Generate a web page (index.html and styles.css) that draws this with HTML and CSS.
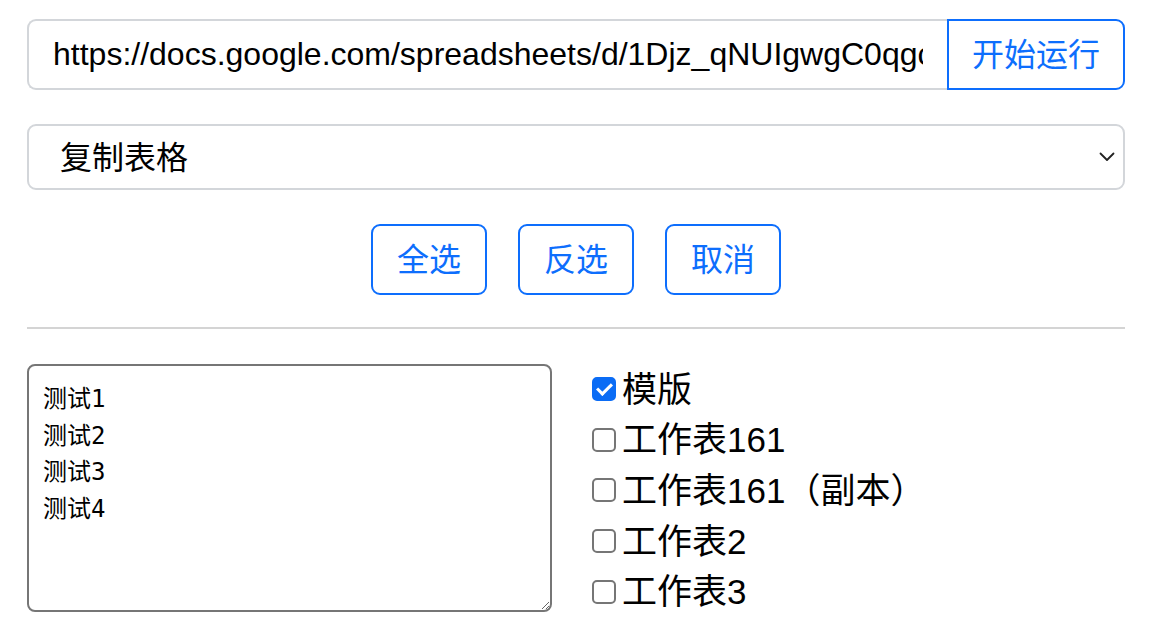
FILE: index.html
```html
<!DOCTYPE html>
<html lang="zh-CN">
<head>
<meta charset="utf-8">
<title>复制表格</title>
<link rel="stylesheet" href="styles.css">
</head>
<body>
<main class="page">
  <div class="input-group">
    <input class="url-input" type="text" value="https://docs.google.com/spreadsheets/d/1Djz_qNUIgwgC0qgcXk2mPv9sT3aLmQwErTyUiOp/edit">
    <button class="btn btn-run" type="button">开始运行</button>
  </div>

  <div class="select-wrap">
    <select class="mode-select">
      <option>复制表格</option>
    </select>
    <svg class="chevron" width="16" height="10" viewBox="0 0 16 10" aria-hidden="true"><path d="M1.5 1.5 L8 8 L14.5 1.5" fill="none" stroke="#222" stroke-width="1.8" stroke-linecap="round" stroke-linejoin="round"/></svg>
  </div>

  <div class="actions">
    <button class="btn btn-small" type="button">全选</button>
    <button class="btn btn-small" type="button">反选</button>
    <button class="btn btn-small" type="button">取消</button>
  </div>

  <hr class="divider">

  <div class="panel">
    <textarea class="names">测试1
测试2
测试3
测试4</textarea>
    <ul class="sheet-list">
      <li class="sheet"><label class="sheet-label"><input class="check" type="checkbox" checked><span>模版</span></label></li>
      <li class="sheet"><label class="sheet-label"><input class="check" type="checkbox"><span>工作表161</span></label></li>
      <li class="sheet"><label class="sheet-label"><input class="check" type="checkbox"><span>工作表161（副本）</span></label></li>
      <li class="sheet"><label class="sheet-label"><input class="check" type="checkbox"><span>工作表2</span></label></li>
      <li class="sheet"><label class="sheet-label"><input class="check" type="checkbox"><span>工作表3</span></label></li>
    </ul>
  </div>
</main>
</body>
</html>
```
FILE: styles.css
```css
* { box-sizing: border-box; }

html, body {
  margin: 0;
  padding: 0;
  background: #fff;
}

body {
  font-family: "Liberation Sans", "Noto Sans CJK SC", sans-serif;
  color: #000;
}

.page {
  padding: 19px 27px 0 27px;
}

.input-group {
  display: flex;
  height: 71px;
}

.url-input {
  flex: 1;
  min-width: 0;
  height: 71px;
  border: 2px solid #d3d6da;
  border-right: none;
  border-radius: 9px 0 0 9px;
  padding: 0 24px;
  font-family: "Liberation Sans", sans-serif;
  font-size: 32px;
  color: #000;
  background: #fff;
  outline: none;
}

.btn {
  font-family: "Noto Sans CJK SC", sans-serif;
  font-size: 32px;
  color: #0d6efd;
  background: #fff;
  border: 2px solid #0d6efd;
  cursor: pointer;
  padding: 0 0 5px 0;
  line-height: 1;
}

.btn-run {
  width: 178px;
  height: 71px;
  border-radius: 0 9px 9px 0;
}

.select-wrap {
  position: relative;
  margin-top: 34px;
}

.mode-select {
  appearance: none;
  -webkit-appearance: none;
  width: 100%;
  height: 66px;
  border: 2px solid #d3d6da;
  border-radius: 9px;
  padding: 0 60px 5px 31px;
  font-family: "Noto Sans CJK SC", sans-serif;
  font-size: 32px;
  color: #000;
  background: #fff;
  outline: none;
}

.chevron {
  position: absolute;
  right: 10px;
  top: 28px;
  pointer-events: none;
}

.actions {
  display: flex;
  justify-content: center;
  gap: 31px;
  margin-top: 34px;
}

.btn-small {
  width: 116px;
  height: 71px;
  border-radius: 9px;
}

.divider {
  margin: 32px 0 0 0;
  border: none;
  border-top: 2px solid #d4d4d4;
  height: 0;
}

.panel {
  display: flex;
  align-items: flex-start;
  gap: 40px;
  margin-top: 35px;
}

.names {
  width: 525px;
  height: 248px;
  border: 2px solid #767676;
  border-radius: 8px;
  padding: 15px 14px 13px 14px;
  font-family: "DejaVu Sans Mono", "Noto Sans CJK SC", monospace;
  font-size: 24px;
  line-height: 36.7px;
  color: #000;
  resize: both;
  outline: none;
}

.sheet-list {
  list-style: none;
  margin: 0;
  padding: 0;
}

.sheet {
  height: 50.6px;
  display: flex;
  align-items: center;
}

.sheet-label {
  display: flex;
  align-items: center;
  gap: 6px;
  font-family: "Liberation Sans", "Noto Sans CJK SC", sans-serif;
  font-size: 35px;
  color: #000;
  line-height: 1;
}

.check {
  appearance: none;
  -webkit-appearance: none;
  width: 24px;
  height: 24px;
  margin: 0;
  border: 2px solid #767676;
  border-radius: 5px;
  background: #fff;
  flex: none;
  position: relative;
}

.check:checked {
  background: #0b6cf5;
  border-color: #0b6cf5;
}

.check:checked::after {
  content: "";
  position: absolute;
  left: 6px;
  top: 1px;
  width: 6px;
  height: 12px;
  border-right: 3px solid #fff;
  border-bottom: 3px solid #fff;
  transform: rotate(45deg);
}
```
